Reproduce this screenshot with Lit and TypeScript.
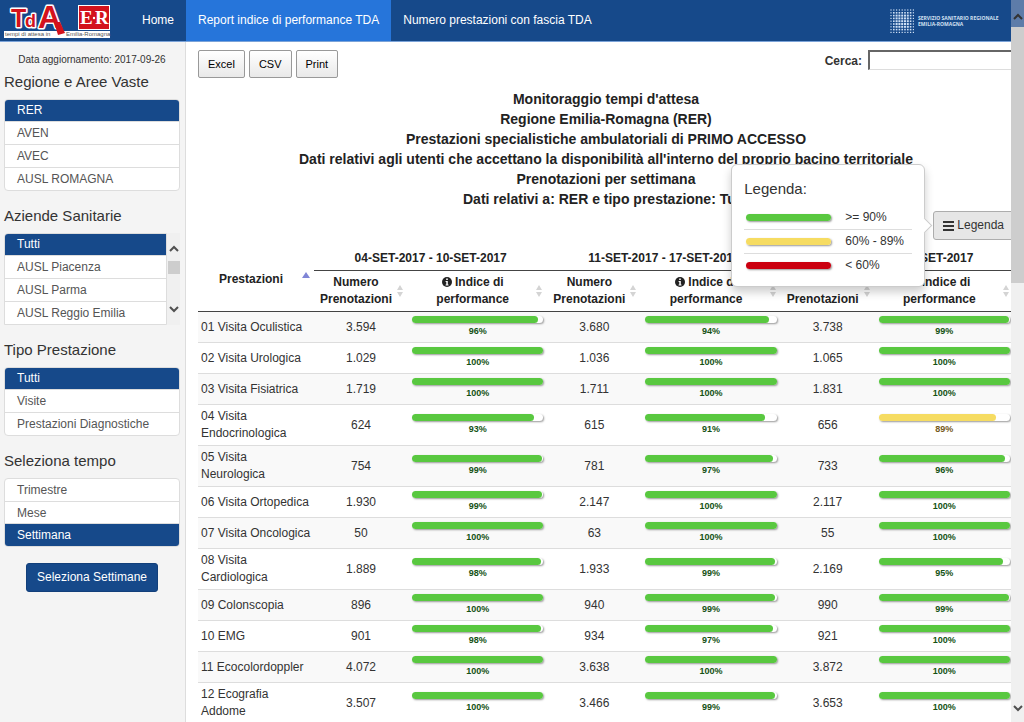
import { LitElement, html, svg, css, nothing } from "lit";
import { customElement, property } from "lit/decorators.js";

type Cell = [string, number];
interface Row {
  name: string;
  weeks: Cell[];
}

const ROWS: Row[] = [
  { name: "01 Visita Oculistica", weeks: [["3.594", 96], ["3.680", 94], ["3.738", 99]] },
  { name: "02 Visita Urologica", weeks: [["1.029", 100], ["1.036", 100], ["1.065", 100]] },
  { name: "03 Visita Fisiatrica", weeks: [["1.719", 100], ["1.711", 100], ["1.831", 100]] },
  { name: "04 Visita Endocrinologica", weeks: [["624", 93], ["615", 91], ["656", 89]] },
  { name: "05 Visita Neurologica", weeks: [["754", 99], ["781", 97], ["733", 96]] },
  { name: "06 Visita Ortopedica", weeks: [["1.930", 99], ["2.147", 100], ["2.117", 100]] },
  { name: "07 Visita Oncologica", weeks: [["50", 100], ["63", 100], ["55", 100]] },
  { name: "08 Visita Cardiologica", weeks: [["1.889", 98], ["1.933", 99], ["2.169", 95]] },
  { name: "09 Colonscopia", weeks: [["896", 100], ["940", 99], ["990", 99]] },
  { name: "10 EMG", weeks: [["901", 98], ["934", 97], ["921", 100]] },
  { name: "11 Ecocolordoppler", weeks: [["4.072", 100], ["3.638", 100], ["3.872", 100]] },
  { name: "12 Ecografia Addome", weeks: [["3.507", 100], ["3.466", 99], ["3.653", 100]] },
];

const WEEKS = [
  "04-SET-2017 - 10-SET-2017",
  "11-SET-2017 - 17-SET-2017",
  "18-SET-2017 - 24-SET-2017",
];

const TITLES = [
  "Monitoraggio tempi d'attesa",
  "Regione Emilia-Romagna (RER)",
  "Prestazioni specialistiche ambulatoriali di PRIMO ACCESSO",
  "Dati relativi agli utenti che accettano la disponibilità all'interno del proprio bacino territoriale",
  "Prenotazioni per settimana",
  "Dati relativi a: RER e tipo prestazione: Tutti",
];

const chevron = (up: boolean) => html`<svg width="10" height="7" viewBox="0 0 10 7" aria-hidden="true">
  <path d=${up ? "M1 6 L5 2 L9 6" : "M1 1 L5 5 L9 1"} fill="none" stroke="#505050" stroke-width="2" />
</svg>`;

@customElement("perf-bar")
export class PerfBar extends LitElement {
  @property({ type: Number }) value = 100;
  @property() level = "";

  static styles = css`
    :host { display: block; }
    .track {
      height: 7px;
      border-radius: 4px;
      background: #fff;
      box-shadow: 1px 1px 2px #999;
    }
    .fill { height: 7px; border-radius: 4px; background: #59c840; }
    .fill.mid { background: #f6dc62; }
    .fill.low { background: #cb0010; }
  `;

  render() {
    const level = this.level || (this.value >= 90 ? "high" : this.value >= 60 ? "mid" : "low");
    return html`<div class="track"><div class="fill ${level}" style="width:${this.value}%"></div></div>`;
  }
}

@customElement("filter-list")
export class FilterList extends LitElement {
  @property() heading = "";
  @property({ attribute: false }) items: string[] = [];
  @property() selected = "";
  @property({ type: Boolean }) scrolls = false;

  static styles = css`
    :host { display: block; }
    h2 { margin: 0 0 9px; font-size: 15px; line-height: 17px; font-weight: 400; color: #333; }
    .box { display: flex; }
    ul {
      flex: 1;
      margin: 0;
      padding: 0;
      list-style: none;
      border-radius: 4px;
      overflow: hidden;
      border: 1px solid #ddd;
      background: #fff;
    }
    .box.scrolls ul { border-radius: 4px 0 0 0; }
    li + li { border-top: 1px solid #ddd; }
    a {
      display: block;
      padding: 0 12px;
      font-size: 12px;
      line-height: 22px;
      color: #555;
      text-decoration: none;
    }
    .on { margin: -1px; }
    .on a { background: #16498a; color: #fff; padding: 0 13px; line-height: 23px; }
    .bar {
      width: 13px;
      display: flex;
      flex-direction: column;
      align-items: center;
      background: #f0f0f0;
      padding: 12px 0;
      box-sizing: border-box;
    }
    .thumb { width: 12px; height: 13px; margin: 9px 0 auto; background: #cdcdcd; }
  `;

  render() {
    return html`
      <h2>${this.heading}</h2>
      <div class="box ${this.scrolls ? "scrolls" : ""}">
        <ul>
          ${this.items.map((t) => html`<li class=${t === this.selected ? "on" : ""}><a href="#">${t}</a></li>`)}
        </ul>
        ${this.scrolls
          ? html`<div class="bar" aria-hidden="true">${chevron(true)}<div class="thumb"></div>${chevron(false)}</div>`
          : nothing}
      </div>
    `;
  }
}

@customElement("app-root")
export class AppRoot extends LitElement {
  static styles = css`
    :host {
      display: flex;
      flex-direction: column;
      position: relative;
      height: 100vh;
      overflow: hidden;
      background: #fff;
      color: #333;
      font-family: "Liberation Sans", Arial, Helvetica, sans-serif;
      font-size: 12px;
      line-height: 17px;
    }
    header {
      display: flex;
      flex: none;
      height: 42px;
      background: #16498a;
      border-bottom: 1px solid #7ba3d8;
      box-sizing: border-box;
    }
    .brand { width: 130px; box-sizing: border-box; padding-left: 3px; }
    .brand svg, .ssr svg { display: block; }
    nav { display: flex; flex: 1; }
    nav a { padding: 0 12px; line-height: 41px; color: #fff; text-decoration: none; }
    nav a.active { background: #2675da; }
    .ssr { padding: 8px 23px 0 0; }
    .layout { display: grid; grid-template-columns: 186px minmax(0, 1fr); flex: 1; min-height: 0; }
    aside {
      display: flex;
      flex-direction: column;
      background: #f4f4f4;
      border-right: 1px solid #ddd;
      padding: 9px 5px 0 4px;
    }
    .date { margin: 0 0 5px; text-align: center; font-size: 10px; }
    filter-list { margin-bottom: 16px; }
    .pick {
      align-self: center;
      font: inherit;
      color: #fff;
      background: #16498a;
      border: 1px solid #123f7a;
      border-radius: 3px;
      padding: 5px 10px;
    }
    main { padding: 8px 10px 0 12px; overflow: hidden; }
    .tools { display: flex; justify-content: space-between; }
    .export { display: flex; gap: 4px; }
    .export button {
      font: inherit;
      font-size: 11px;
      line-height: 16px;
      color: #000;
      padding: 5px 9px;
      border: 1px solid #999;
      border-radius: 2px;
      background: linear-gradient(#fff, #e9e9e9);
    }
    .search { display: flex; gap: 6px; font-weight: 700; line-height: 23px; }
    .search input {
      width: 146px;
      height: 20px;
      box-sizing: border-box;
      border: 1px solid;
      border-width: 2px 1px 1px 2px;
      border-color: #666 #ddd #ddd #666;
      background: #fff;
      font: inherit;
    }
    .titles { margin: 11px 0 2px; text-align: center; font-size: 14px; line-height: 20px; font-weight: 700; color: #222; }
    .titles p { margin: 0; }
    .legend { display: flex; justify-content: flex-end; }
    .anchor { position: relative; }
    .anchor > button {
      display: flex;
      align-items: center;
      gap: 3px;
      font: inherit;
      color: #333;
      background: #e6e6e6;
      border: 1px solid #adadad;
      border-radius: 3px;
      padding: 5px 9px;
    }
    .pop {
      position: absolute;
      right: calc(100% + 8px);
      top: -47px;
      width: 194px;
      box-sizing: border-box;
      padding: 13px 12px 9px;
      background: #fff;
      border: 1px solid #ccc;
      border-radius: 6px;
      box-shadow: 0 5px 10px rgba(0, 0, 0, 0.2);
      z-index: 2;
    }
    .pop::after {
      content: "";
      position: absolute;
      right: -6px;
      top: 55px;
      width: 10px;
      height: 10px;
      background: #fff;
      border: 1px solid #ccc;
      border-width: 1px 1px 0 0;
      transform: rotate(45deg);
    }
    .pop h3 { margin: 0 0 6px; font-size: 15px; line-height: 22px; font-weight: 400; }
    .key { display: grid; grid-template-columns: 85px 1fr; gap: 14px; align-items: center; height: 23px; padding: 0 2px; }
    .key + .key { border-top: 1px solid #ddd; }
    table { width: 100%; margin-top: 7px; border-collapse: separate; border-spacing: 0; table-layout: fixed; }
    .c-name { width: 116px; }
    .c-num { width: 94px; }
    th { padding: 3px 4px; font-weight: 700; border-bottom: 1px solid #444; color: #222; }
    .week { height: 17px; }
    .head { display: flex; align-items: center; gap: 2px; }
    .head span { flex: 1; }
    .head svg { flex: none; }
    .info { vertical-align: -1px; }
    td { padding: 4px; border-bottom: 1px solid #ddd; text-align: center; }
    td.name { padding: 3px 2px 3px 3px; text-align: left; }
    tbody tr:nth-child(odd) td { background: #f9f9f9; }
    .pct { margin-top: 2px; font-size: 9px; line-height: 13px; font-weight: 700; color: #145214; }
    .pct.mid { color: #75591c; }
    .scroll {
      position: absolute;
      top: 0;
      right: 0;
      bottom: 0;
      width: 13px;
      display: flex;
      flex-direction: column;
      align-items: center;
      background: #f0f0f0;
      z-index: 3;
    }
    .up { align-self: stretch; height: 27px; background: #5d7ca9; text-align: center; }
    .grip { align-self: stretch; height: 256px; margin-bottom: auto; background: #cdcdcd; }
    .down { height: 22px; }
  `;

  private logo() {
    return html`<svg width="108" height="40" viewBox="0 0 108 40" role="img" aria-label="TdA Emilia-Romagna">
      <rect x="1" y="31" width="106" height="7" fill="#fff" />
      <g font-family="Liberation Sans" font-size="6" fill="#555">
        <text x="2" y="36">tempi di attesa in</text>
        <text x="63" y="36">Emilia-Romagna</text>
      </g>
      <g font-family="Liberation Sans" font-weight="700" fill="#d3121c" stroke="#fff" stroke-width="3" stroke-linejoin="round" paint-order="stroke">
        <text x="8" y="27" font-size="25">T</text>
        <text x="22" y="27" font-size="18">d</text>
        <text x="35" y="28" font-size="32">A</text>
      </g>
      <path d="M51 22 L57 22 L62 33 L55 35 Z" fill="#d3121c" />
      <rect x="75" y="5" width="32" height="25" fill="#fff" />
      <rect x="76" y="6" width="30" height="23" fill="#d3121c" />
      <g font-family="Liberation Serif" font-weight="700" font-size="19" fill="#fff">
        <text x="77" y="24">E</text>
        <text x="92" y="24">R</text>
      </g>
      <circle cx="91" cy="18" r="1.2" fill="#fff" />
    </svg>`;
  }

  private ssr() {
    const dots = [];
    for (let r = 0; r < 9; r++) {
      for (let c = 0; c < 9; c++) {
        const edge = Math.max(Math.abs(r - 4), Math.abs(c - 4));
        const s = edge > 3 ? 1.2 : edge > 2 ? 1.6 : 2;
        dots.push(svg`<rect x=${1 + c * 2.8 - s / 2} y=${2 + r * 2.8 - s / 2} width=${s} height=${s} fill="#cfe0f5" />`);
      }
    }
    return html`<svg width="111" height="26" viewBox="0 0 111 26" role="img" aria-label="Servizio Sanitario Regionale">
      ${dots}
      <g font-family="Open Sans" font-weight="700" font-size="5" fill="#d4e1f2">
        <text x="28" y="12">SERVIZIO SANITARIO REGIONALE</text>
        <text x="28" y="18">EMILIA-ROMAGNA</text>
      </g>
    </svg>`;
  }

  private sort(asc = false) {
    return asc
      ? html`<svg width="8" height="14" viewBox="0 0 8 14" aria-label="Ordinamento crescente"><path d="M0 6 L4 0 L8 6 Z" fill="#7f85d6" /></svg>`
      : html`<svg width="8" height="12" viewBox="0 0 8 12" aria-hidden="true"><path d="M1 5 L4 0 L7 5 Z M1 7 L4 12 L7 7 Z" fill="#d4d4d4" /></svg>`;
  }

  private info() {
    return html`<svg class="info" width="10" height="10" viewBox="0 0 10 10" aria-hidden="true">
      <circle cx="5" cy="5" r="5" fill="#222" />
      <path d="M4.2 1.4 H5.8 V3 H4.2 Z M3.6 4 H5.8 V7.4 H6.5 V8.4 H3.6 V7.4 H4.3 V5 H3.6 Z" fill="#fff" />
    </svg>`;
  }

  render() {
    return html`
      <header>
        <div class="brand">${this.logo()}</div>
        <nav>
          <a href="#">Home</a>
          <a href="#" class="active">Report indice di performance TDA</a>
          <a href="#">Numero prestazioni con fascia TDA</a>
        </nav>
        <div class="ssr">${this.ssr()}</div>
      </header>
      <div class="layout">
        <aside>
          <p class="date">Data aggiornamento: 2017-09-26</p>
          <filter-list heading="Regione e Aree Vaste" .items=${["RER", "AVEN", "AVEC", "AUSL ROMAGNA"]} selected="RER"></filter-list>
          <filter-list heading="Aziende Sanitarie" .items=${["Tutti", "AUSL Piacenza", "AUSL Parma", "AUSL Reggio Emilia"]} selected="Tutti" scrolls></filter-list>
          <filter-list heading="Tipo Prestazione" .items=${["Tutti", "Visite", "Prestazioni Diagnostiche"]} selected="Tutti"></filter-list>
          <filter-list heading="Seleziona tempo" .items=${["Trimestre", "Mese", "Settimana"]} selected="Settimana"></filter-list>
          <button class="pick">Seleziona Settimane</button>
        </aside>
        <main>
          <div class="tools">
            <div class="export">
              <button>Excel</button><button>CSV</button><button>Print</button>
            </div>
            <label class="search">Cerca: <input type="search" /></label>
          </div>
          <div class="titles">${TITLES.map((t) => html`<p>${t}</p>`)}</div>
          <div class="legend">
            <div class="anchor">
              <button>
                <svg width="11" height="10" viewBox="0 0 11 10" aria-hidden="true"><path d="M0 1 H11 M0 5 H11 M0 9 H11" stroke="#333" stroke-width="2" /></svg>
                Legenda
              </button>
              <div class="pop">
                <h3>Legenda:</h3>
                <div class="key"><perf-bar level="high"></perf-bar>&gt;= 90%</div>
                <div class="key"><perf-bar level="mid"></perf-bar>60% - 89%</div>
                <div class="key"><perf-bar level="low"></perf-bar>&lt; 60%</div>
              </div>
            </div>
          </div>
          <table>
            <colgroup>
              <col class="c-name" />
              ${WEEKS.map(() => html`<col class="c-num" /><col />`)}
            </colgroup>
            <thead>
              <tr>
                <th rowspan="2"><div class="head"><span>Prestazioni</span>${this.sort(true)}</div></th>
                ${WEEKS.map((w) => html`<th class="week" colspan="2">${w}</th>`)}
              </tr>
              <tr>
                ${WEEKS.map(
                  () => html`
                    <th><div class="head"><span>Numero Prenotazioni</span>${this.sort()}</div></th>
                    <th><div class="head"><span>${this.info()} Indice di<br />performance</span>${this.sort()}</div></th>
                  `
                )}
              </tr>
            </thead>
            <tbody>
              ${ROWS.map(
                (r) => html`<tr>
                  <td class="name">${r.name}</td>
                  ${r.weeks.map(
                    ([n, p]) => html`
                      <td>${n}</td>
                      <td><perf-bar .value=${p}></perf-bar><div class="pct ${p < 90 ? "mid" : ""}">${p}%</div></td>
                    `
                  )}
                </tr>`
              )}
            </tbody>
          </table>
        </main>
      </div>
      <div class="scroll" aria-hidden="true">
        <div class="up"><svg width="10" height="27" viewBox="0 0 10 27"><path d="M1 19 L5 15 L9 19" fill="none" stroke="#333" stroke-width="2" /></svg></div>
        <div class="grip"></div>
        <div class="down">${chevron(false)}</div>
      </div>
    `;
  }
}
